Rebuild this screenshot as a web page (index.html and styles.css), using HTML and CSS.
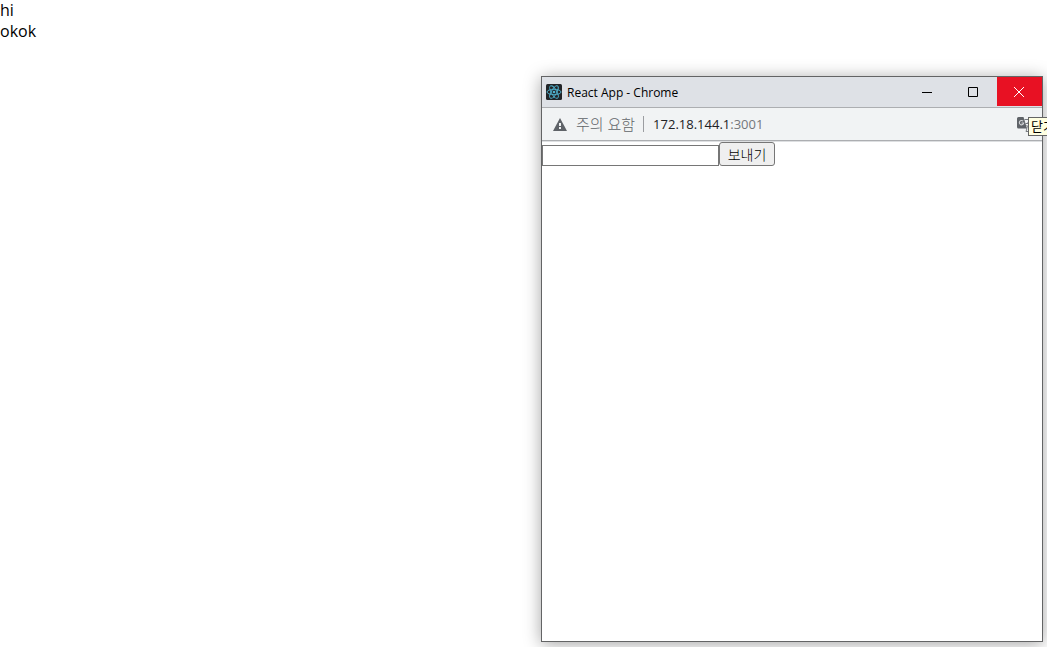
FILE: index.html
```
<!DOCTYPE html>
<html lang="ko">
<head>
    <meta charset="UTF-8">
    <meta name="viewport" content="width=device-width, initial-scale=1.0">
    <title>React App</title>
    <link rel="stylesheet" href="styles.css">
</head>
<body>
    <main class="messages">
        <div>hi</div>
        <div>okok</div>
    </main>

    <section class="popup">
        <header class="titlebar">
            <svg class="favicon" viewBox="0 0 16 16">
                <rect width="16" height="16" rx="1.5" fill="#222528"/>
                <g fill="none" stroke="#4fb3d0" stroke-width="0.9">
                    <ellipse cx="8" cy="8" rx="7" ry="2.7"/>
                    <ellipse cx="8" cy="8" rx="7" ry="2.7" transform="rotate(60 8 8)"/>
                    <ellipse cx="8" cy="8" rx="7" ry="2.7" transform="rotate(120 8 8)"/>
                </g>
                <circle cx="8" cy="8" r="1.3" fill="#4fb3d0"/>
            </svg>
            <span class="title">React App - Chrome</span>
            <div class="window-buttons">
                <button type="button" aria-label="최소화">
                    <svg viewBox="0 0 10 10"><path d="M0 5.5h10"/></svg>
                </button>
                <button type="button" aria-label="최대화">
                    <svg viewBox="0 0 10 10"><path d="M.5.5h9v9h-9z"/></svg>
                </button>
                <button type="button" class="close" aria-label="닫기">
                    <svg viewBox="0 0 10 10"><path d="M0 0l10 10M10 0L0 10"/></svg>
                </button>
            </div>
        </header>

        <div class="address-bar">
            <svg class="warning" viewBox="0 0 14 13">
                <path fill="#5f6368" d="M7 0l7 13H0z"/>
                <path fill="#f1f3f4" d="M6 5h2v3H6zM6 9h2v2H6z"/>
            </svg>
            <span class="security">주의 요함</span>
            <span class="url">172.18.144.1<span class="port">:3001</span></span>
            <svg class="translate" viewBox="0 0 16 16">
                <path fill="#5f6368" d="M1.5 1h5l3.500 11.500h-8.500A1.500 1.500 0 0 1 0 11V2.500A1.500 1.500 0 0 1 1.500 1z"/>
                <path fill="none" stroke="#d5d7d9" stroke-width="1.100" d="M6.200 5.200A2.200 2.200 0 1 0 6.700 7H4.500"/>
                <path fill="none" stroke="#777b80" d="M7.500 3.500h7.500v12H9l1-3M8.500 7.500h5M11 6v1.500M12.500 8c-.5 2-2 3.500-3.500 4.500M9.500 9l3.500 4"/>
            </svg>
        </div>

        <form class="send-form">
            <input type="text" aria-label="메시지">
            <button type="button">보내기</button>
        </form>

        <div class="tooltip">닫기</div>
    </section>
</body>
</html>
```

FILE: styles.css
```
* { box-sizing: border-box; }
body {
    margin: 0;
    overflow: hidden;
    background: #fff;
    color: #000;
    font: 16px/21px "Open Sans", "Noto Sans CJK KR", sans-serif;
}
.popup {
    position: absolute;
    top: 76px;
    right: 4px;
    bottom: 5px;
    width: 502px;
    background: #fff;
    border: 1px solid #636465;
    box-shadow: 0 2px 16px rgba(0, 0, 0, 0.36);
}
.titlebar {
    display: flex;
    align-items: center;
    height: 31px;
    padding-left: 4px;
    background: #dee1e6;
    border-bottom: 1px solid #acaeb1;
    font-size: 12px;
}
.favicon {
    width: 16px;
    height: 16px;
    margin-right: 5px;
}
.window-buttons {
    display: flex;
    align-self: stretch;
    margin-left: auto;
}
.window-buttons button {
    display: flex;
    align-items: center;
    justify-content: center;
    width: 46px;
    height: 29px;
    padding: 0 2px 0 0;
    border: 0;
    background: none;
}
.window-buttons svg {
    width: 10px;
    height: 10px;
    fill: none;
    stroke: #000;
}
.window-buttons .close {
    width: 45px;
    background: #e81123;
}
.window-buttons .close svg { stroke: #fff; }
.address-bar {
    display: flex;
    align-items: center;
    height: 33px;
    padding: 0 9px 0 11px;
    background: #f1f3f4;
    border-bottom: 1px solid #acaeb1;
    box-shadow: 0 1px #dddfe1;
    font-size: 15px;
}
.warning {
    width: 14px;
    height: 13px;
    margin-right: 9px;
}
.security {
    padding-right: 8px;
    border-right: 1px solid #9b9da1;
    color: #5f6368;
    font-weight: 300;
    line-height: 16px;
}
.url {
    padding-left: 9px;
    color: #202124;
    font-size: 13px;
}
.port { color: #74777b; }
.translate {
    width: 16px;
    height: 16px;
    margin-left: auto;
}
.send-form {
    display: flex;
    align-items: flex-end;
    padding-top: 1px;
}
.send-form input {
    width: 177px;
    height: 21px;
    padding: 1px 2px;
    border: 1px solid #767676;
    font: inherit;
    font-size: 13px;
}
.send-form button {
    width: 56px;
    height: 24px;
    padding: 0;
    background: #efefef;
    border: 1px solid #767676;
    border-radius: 3px;
    color: #000;
    font: 300 14px/20px "Noto Sans CJK KR", sans-serif;
}
.tooltip {
    position: absolute;
    top: 40px;
    left: 486px;
    height: 19px;
    padding: 0 2px;
    background: #ffffe1;
    border: 1px solid #646464;
    font-size: 13px;
    line-height: 17px;
    white-space: nowrap;
}
```
